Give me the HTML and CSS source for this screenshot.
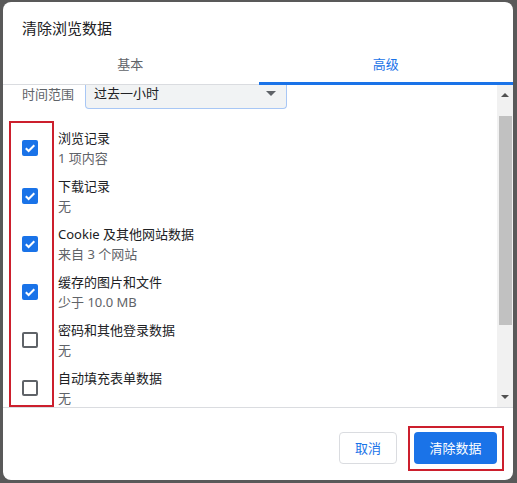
FILE: index.html
```html
<!DOCTYPE html>
<html lang="zh-CN">
<head>
<meta charset="utf-8">
<link rel="stylesheet" href="styles.css">
</head>
<body>
<div class="dialog">
  <div class="title">清除浏览数据</div>
  <div class="tabs">
    <div class="tab">基本</div>
    <div class="tab active">高级</div>
  </div>
  <div class="body">
    <div class="content">
      <div class="inner">
        <div class="range">
          <span class="range-label">时间范围</span>
          <div class="select">
            <span>过去一小时</span>
            <span class="caret"></span>
          </div>
        </div>
        <div class="row">
          <span class="cb checked"><svg viewBox="0 0 16 16" width="16" height="16"><path d="M3.8 8.2 L6.6 11 L12.3 5.2" fill="none" stroke="#fff" stroke-width="2"/></svg></span>
          <div class="txt"><div class="lbl">浏览记录</div><div class="sub">1 项内容</div></div>
        </div>
        <div class="row">
          <span class="cb checked"><svg viewBox="0 0 16 16" width="16" height="16"><path d="M3.8 8.2 L6.6 11 L12.3 5.2" fill="none" stroke="#fff" stroke-width="2"/></svg></span>
          <div class="txt"><div class="lbl">下载记录</div><div class="sub">无</div></div>
        </div>
        <div class="row">
          <span class="cb checked"><svg viewBox="0 0 16 16" width="16" height="16"><path d="M3.8 8.2 L6.6 11 L12.3 5.2" fill="none" stroke="#fff" stroke-width="2"/></svg></span>
          <div class="txt"><div class="lbl">Cookie 及其他网站数据</div><div class="sub">来自 3 个网站</div></div>
        </div>
        <div class="row">
          <span class="cb checked"><svg viewBox="0 0 16 16" width="16" height="16"><path d="M3.8 8.2 L6.6 11 L12.3 5.2" fill="none" stroke="#fff" stroke-width="2"/></svg></span>
          <div class="txt"><div class="lbl">缓存的图片和文件</div><div class="sub">少于 10.0 MB</div></div>
        </div>
        <div class="row">
          <span class="cb"></span>
          <div class="txt"><div class="lbl">密码和其他登录数据</div><div class="sub">无</div></div>
        </div>
        <div class="row">
          <span class="cb"></span>
          <div class="txt"><div class="lbl">自动填充表单数据</div><div class="sub">无</div></div>
        </div>
      </div>
      <div class="mark mark-cbs"></div>
    </div>
    <div class="scrollbar">
      <span class="arrow up"></span>
      <div class="track"><div class="thumb"></div></div>
      <span class="arrow down"></span>
    </div>
  </div>
  <div class="footer">
    <button class="btn cancel">取消</button>
    <div class="confirm-wrap">
      <button class="btn primary">清除数据</button>
      <div class="mark mark-btn"></div>
    </div>
  </div>
</div>
</body>
</html>
```

FILE: styles.css
```css
* { box-sizing: border-box; }
html, body { margin: 0; padding: 0; }
body {
  width: 517px;
  height: 483px;
  background: #595959;
  padding: 2px 4px 3px 3px;
  font-family: "Noto Sans", "Noto Sans CJK SC", sans-serif;
  overflow: hidden;
}
.dialog {
  width: 510px;
  height: 478px;
  background: #fff;
  border-radius: 8px;
  overflow: hidden;
  display: flex;
  flex-direction: column;
}
.title {
  height: 46px;
  padding: 16px 0 0 19px;
  font-size: 15px;
  line-height: 20px;
  color: #202124;
}
.tabs {
  display: flex;
  height: 37px;
  border-bottom: 1px solid #dadce0;
}
.tab {
  flex: 1;
  text-align: center;
  font-size: 13px;
  line-height: 33px;
  color: #5f6368;
}
.tab.active {
  color: #1a73e8;
  border-bottom: 3px solid #1a73e8;
  margin-bottom: -1px;
  margin-left: 1px;
}
.body {
  display: flex;
  height: 323px;
  border-bottom: 1px solid #dadce0;
}
.content {
  flex: 1;
  position: relative;
  overflow: hidden;
}
.inner {
  margin-top: -8px;
}
.range {
  display: flex;
  align-items: center;
  padding-left: 19px;
  height: 32px;
  margin-bottom: 15px;
}
.range-label {
  font-size: 13px;
  color: #5f6368;
  width: 63px;
}
.select {
  width: 202px;
  height: 32px;
  background: #f1f3f4;
  border: 1px solid #a8c7f5;
  border-top: none;
  border-radius: 4px;
  display: flex;
  align-items: center;
  justify-content: space-between;
  padding: 0 10px 0 8px;
  font-size: 13px;
  color: #202124;
}
.caret {
  width: 0;
  height: 0;
  border-left: 5px solid transparent;
  border-right: 5px solid transparent;
  border-top: 5px solid #5f6368;
  margin-top: 1px;
}
.row {
  display: flex;
  align-items: center;
  height: 48px;
  padding-left: 19px;
}
.cb {
  width: 16px;
  height: 16px;
  border-radius: 2px;
  border: 2px solid #5f6368;
  margin-right: 20px;
  flex: none;
  display: flex;
}
.cb.checked {
  border: none;
  background: #1a73e8;
}
.txt { font-size: 13px; line-height: 20px; }
.lbl { color: #202124; }
.sub { color: #5f6368; }
.mark {
  position: absolute;
  border: 2px solid #cc1f2d;
}
.mark-cbs {
  left: 6px;
  top: 36px;
  width: 45px;
  height: 286px;
}
.scrollbar {
  width: 16px;
  background: #f1f1f1;
  display: flex;
  flex-direction: column;
  align-items: center;
}
.arrow {
  width: 0;
  height: 0;
  border-left: 4px solid transparent;
  border-right: 4px solid transparent;
  margin: 6px 0;
}
.arrow.up { border-bottom: 4px solid #505050; margin-top: 8px; }
.arrow.down { border-top: 4px solid #505050; margin-bottom: 8px; }
.track { flex: 1; width: 100%; padding: 13px 1px 0 2px; }
.thumb { height: 209px; background: #c1c1c1; }
.footer {
  flex: 1;
  display: flex;
  justify-content: flex-end;
  align-items: flex-start;
  padding: 24px 16px 0 0;
  gap: 17px;
}
.btn {
  height: 32px;
  border-radius: 4px;
  font-family: "Noto Sans", "Noto Sans CJK SC", sans-serif;
  font-size: 13px;
  line-height: 20px;
  padding: 0 15px;
  cursor: pointer;
}
.cancel {
  width: 58px;
  background: #fff;
  border: 1px solid #dadce0;
  color: #1a73e8;
}
.primary {
  width: 83px;
  background: #1a73e8;
  border: none;
  color: #fff;
}
.confirm-wrap { position: relative; }
.mark-btn {
  left: -6px;
  top: -6px;
  width: 96px;
  height: 45px;
}
```
